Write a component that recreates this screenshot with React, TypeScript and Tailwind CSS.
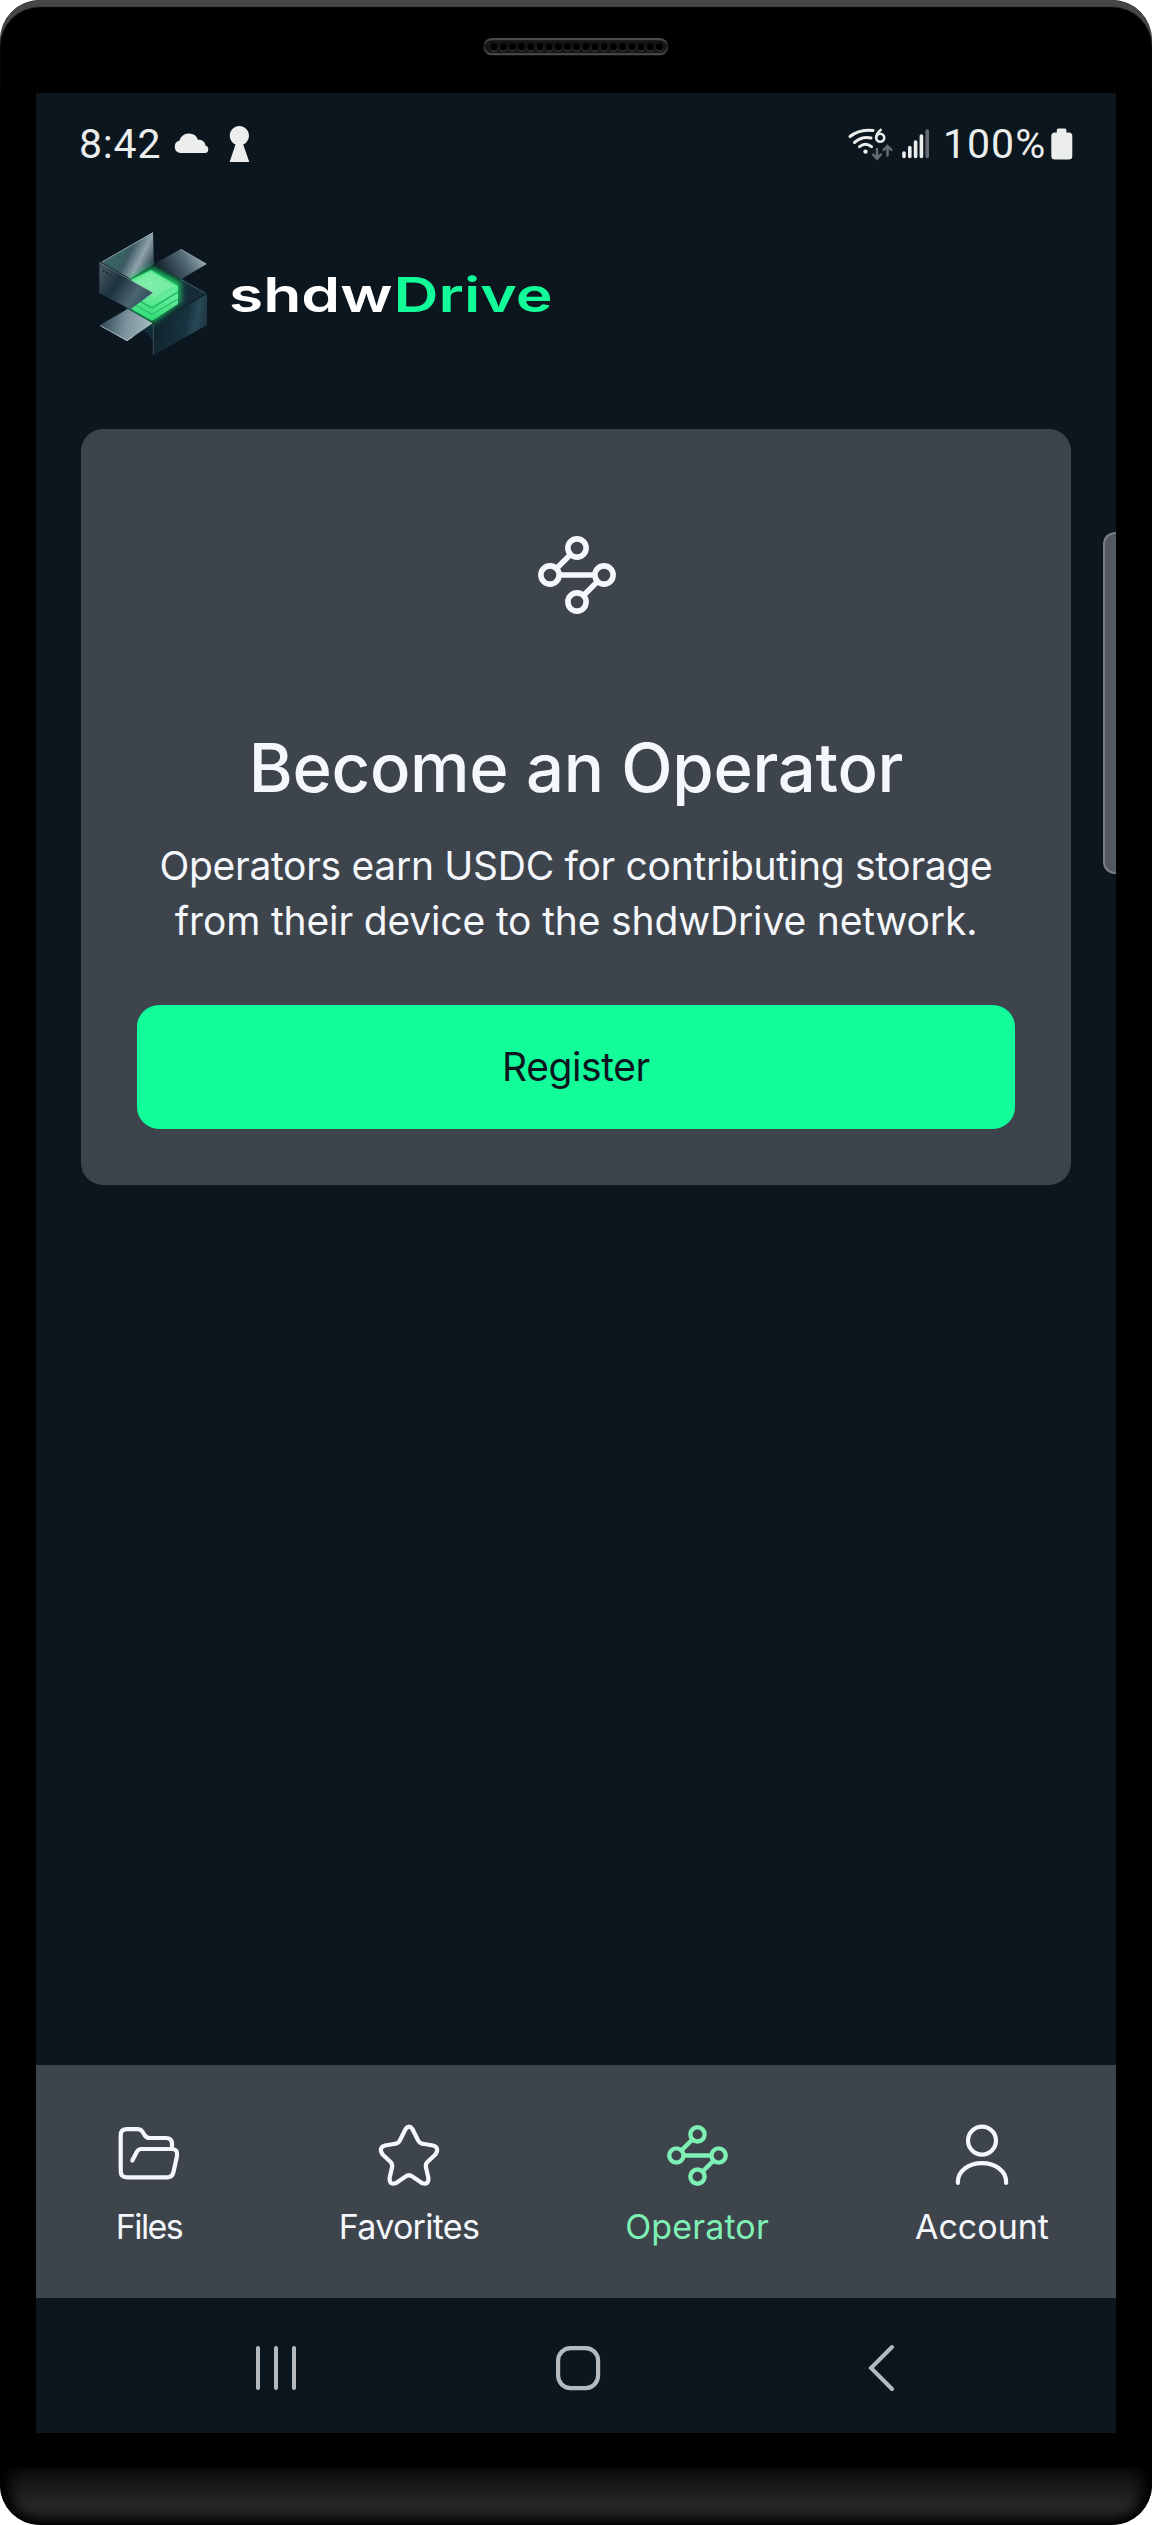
import type { ReactNode } from 'react';

const HOLES = Array.from({ length: 19 }, (_, i) => 11 + i * 9.19);

function Speaker() {
  return (
    <svg width="186" height="18" viewBox="0 0 186 18" className="block">
      <defs>
        <linearGradient id="sp" x1="0" y1="0" x2="0" y2="1">
          <stop offset="0" stopColor="#4c4c4c" />
          <stop offset="0.4" stopColor="#1c1c1c" />
          <stop offset="1" stopColor="#484848" />
        </linearGradient>
      </defs>
      <rect x="1.2" y="1.2" width="183.2" height="15" rx="7.5" fill="#151515" stroke="url(#sp)" strokeWidth="2.2" />
      {HOLES.map((x) => (
        <g key={x}>
          <circle cx={x} cy="9.7" r="3.7" fill="#4a4a4a" />
          <circle cx={x} cy="8.9" r="3.6" fill="#000" />
        </g>
      ))}
    </svg>
  );
}

function StatusBar() {
  return (
    <div className="flex h-[102px] items-start justify-between pl-[43px] pr-[43px] text-[#eceeee]">
      <div className="flex items-start">
        <span className="mt-[27px] w-[80px] whitespace-nowrap font-['Roboto',sans-serif] text-[41px] leading-[48px] tracking-[0.8px]">8:42</span>
        <svg width="92" height="40" viewBox="159 125 92 40" className="mt-[32px]" fill="currentColor">
          <path d="M180.500 153A6.300 6.300 0 0 1 179.600 140.600A9.700 9.700 0 0 1 198 139.800A6.600 6.600 0 0 1 205.600 145.600A3.900 3.900 0 0 1 205.800 153Z" />
          <path d="M235.500 144.500A9.600 9.600 0 1 1 243.200 144.500L249.300 162H229.600Z" />
        </svg>
      </div>
      <div className="flex items-start">
        <svg width="84" height="40" viewBox="847 125 84 40" className="mt-[32px]" fill="none" strokeLinecap="round">
          <g stroke="#eceeee" strokeWidth="3">
            <path d="M850 136.500Q860 128.500 873 130.600" />
            <path d="M854.500 142.500Q862 136 871 138" />
            <path d="M859.500 146.700Q865.500 141.700 871.500 146.700" />
          </g>
          <circle cx="865.500" cy="151.600" r="2.200" fill="#eceeee" />
          <path d="M881.500 129.200Q876.500 133 876.200 137.700" stroke="#eceeee" strokeWidth="2.600" strokeLinecap="butt" />
          <circle cx="880.200" cy="137.700" r="4" stroke="#eceeee" strokeWidth="2.600" />
          <g stroke="#656b71" strokeWidth="2.600">
            <path d="M877 149V158M873.200 154.700L877 158.600L880.800 154.700" />
            <path d="M887.500 155.500V146.500M883.700 149.900L887.500 146L891.300 149.900" />
          </g>
          <g stroke="#eceeee" strokeWidth="3.600">
            <path d="M904 153V156.400M909.800 147.500V156.400M915.600 142V156.400M921.400 136V156.400" />
            <path d="M927.200 131V156.400" stroke="#656b71" />
          </g>
        </svg>
        <span className="ml-[12px] mt-[27px] w-[108px] whitespace-nowrap font-['Roboto',sans-serif] text-[41px] leading-[48px] tracking-[1px]">100%</span>
        <svg width="22" height="32" viewBox="0 0 22 32" className="mt-[35px]" fill="currentColor">
          <rect x="5.800" y="0.500" width="9.600" height="8" rx="1.500" />
          <rect x="0.300" y="4.500" width="21" height="27" rx="3.500" />
        </svg>
      </div>
    </div>
  );
}

function LogoMark() {
  return (
    <svg width="140" height="154" viewBox="0 0 420 462" className="block">
      <defs>
        <linearGradient id="lb" x1="0.1" y1="0.2" x2="1" y2="0.6">
          <stop offset="0" stopColor="#3f5f6b" />
          <stop offset="0.4" stopColor="#35615f" />
          <stop offset="0.5" stopColor="#3d5963" />
          <stop offset="0.75" stopColor="#8fa3ab" />
          <stop offset="1" stopColor="#344b57" />
        </linearGradient>
        <linearGradient id="lf" x1="0" y1="0.2" x2="1" y2="0.8">
          <stop offset="0" stopColor="#43555f" />
          <stop offset="0.35" stopColor="#1c323e" />
          <stop offset="0.7" stopColor="#4b6571" />
          <stop offset="1" stopColor="#274854" />
        </linearGradient>
        <linearGradient id="lt" x1="1" y1="0.3" x2="0.1" y2="0.6">
          <stop offset="0" stopColor="#a3b5bb" />
          <stop offset="0.45" stopColor="#526873" />
          <stop offset="1" stopColor="#162631" />
        </linearGradient>
        <linearGradient id="lr" x1="0" y1="0.4" x2="1" y2="0.6">
          <stop offset="0" stopColor="#10242c" />
          <stop offset="0.6" stopColor="#173340" />
          <stop offset="0.78" stopColor="#294957" />
          <stop offset="1" stopColor="#1b303c" />
        </linearGradient>
        <linearGradient id="ll" x1="0" y1="0.4" x2="1" y2="0.5">
          <stop offset="0" stopColor="#2b4552" />
          <stop offset="0.5" stopColor="#7c939d" />
          <stop offset="1" stopColor="#a5bcc0" />
        </linearGradient>
        <linearGradient id="lg" x1="0.6" y1="0" x2="0.5" y2="1">
          <stop offset="0" stopColor="#48e989" />
          <stop offset="0.5" stopColor="#67ee9d" />
          <stop offset="1" stopColor="#2fd873" />
        </linearGradient>
        <filter id="glow" x="-30%" y="-30%" width="160%" height="160%">
          <feGaussianBlur stdDeviation="9" />
        </filter>
      </defs>
      <path d="M185 355L219 342V390Z" fill="#0f2c36" />
      <path d="M64 157L219 67L222 162L152 206Z" fill="url(#lb)" />
      <path d="M66 156L219 68" stroke="#b9c7cc" strokeWidth="3" fill="none" opacity="0.7" />
      <path d="M303 208L379 250L222 341V300Z" fill="#132730" />
      <path d="M303 208L379 250L300 295Z" fill="#162c38" />
      <path d="M222 341L381 252V345L222 434Z" fill="url(#lr)" />
      <path d="M303 208L376 250" stroke="#5c7480" strokeWidth="2" fill="none" />
      <path d="M150 205L215 170L302 214V275L217 338L146 296Z" fill="#1fd46b" filter="url(#glow)" opacity="0.9" />
      <path d="M222 162L303 117L380 162L303 208Z" fill="url(#lt)" />
      <path d="M303 118L379 162" stroke="#c4d0d3" strokeWidth="2" opacity="0.7" />
      <path d="M155 208L213 180L294 228V282L216 332L142 290Z" fill="url(#lg)" />
      <path d="M213 182L293 229L216 278L145 238L158 208Z" fill="#5fe993" />
      <path d="M165 212L213 187L280 228L222 262L178 238Z" fill="#8bf0b0" opacity="0.6" />
      <path d="M148 256L216 294L294 246" stroke="#25bd65" strokeWidth="5" fill="none" />
      <path d="M148 276L216 313L294 267" stroke="#27c169" strokeWidth="4" fill="none" />
      <path d="M190 228L212 216V238" stroke="#a5f6c2" strokeWidth="3" fill="none" opacity="0.7" />
      <path d="M58 157L219 248L151 298L58 250Z" fill="url(#lf)" />
      <path d="M58 157L219 248L198 263" stroke="#b9d7cd" strokeWidth="2" fill="none" opacity="0.6" />
      <path d="M60 345L143 297L218 340L141 393Z" fill="url(#ll)" />
      <path d="M61 347L141 392L160 379" stroke="#c8d4d6" strokeWidth="3" fill="none" opacity="0.85" />
      <path d="M220 343V434" stroke="#5d7681" strokeWidth="2" />
      <g fill="#182a33">
        <circle cx="71" cy="184" r="3" />
        <circle cx="81" cy="189" r="3" />
        <circle cx="91" cy="195" r="3" />
      </g>
    </svg>
  );
}

function Header() {
  return (
    <div className="flex h-[234px] items-start pl-[44px] pt-[15px]">
      <LogoMark />
      <svg width="330" height="60" viewBox="0 0 330 60" className="ml-[10px] mt-[55px] overflow-visible font-['Inter',sans-serif] text-[48px] font-semibold">
        <text x="-1" y="46.700" textLength="163.500" lengthAdjust="spacingAndGlyphs" fill="#ffffff">shdw</text>
        <text x="163.500" y="46.700" textLength="159" lengthAdjust="spacingAndGlyphs" fill="#12fc9a">Drive</text>
      </svg>
    </div>
  );
}

function NodesIcon({ size, stroke }: { size: number; stroke: number }) {
  return (
    <svg width={size} height={size} viewBox="0 0 78 78" fill="none" stroke="currentColor" strokeWidth={stroke} className="block">
      <circle cx="39" cy="12" r="9.100" />
      <circle cx="12" cy="39" r="9.100" />
      <circle cx="66" cy="39" r="9.100" />
      <circle cx="39" cy="66" r="9.100" />
      <path d="M32.500 18.500L18.500 32.500M21 39H57M59.500 45.500L45.500 59.500" />
    </svg>
  );
}

function OperatorCard() {
  return (
    <section className="mx-[45px] flex h-[756px] flex-col items-center rounded-[22px] bg-[#3e444b] px-14 text-[#f4f7fc]">
      <div className="ml-px mt-[107px]">
        <NodesIcon size={78} stroke={5.6} />
      </div>
      <h1 className="mt-[114px] h-[80px] whitespace-nowrap font-['Inter',sans-serif] text-[67px] font-medium leading-[80px] tracking-[-0.3px]">Become an Operator</h1>
      <p className="mt-[30px] text-center font-['Inter',sans-serif] text-[39px] leading-[55px]">
        <span className="block whitespace-nowrap tracking-[-0.3px]">Operators earn USDC for contributing storage</span>
        <span className="block whitespace-nowrap tracking-[-0.15px]">from their device to the shdwDrive network.</span>
      </p>
      <button className="mt-[57px] h-[124px] w-full shrink-0 rounded-[22px] bg-[#12fc9a] font-['Inter',sans-serif] text-[39px] tracking-[-0.4px] text-[#0c161e]">Register</button>
    </section>
  );
}

function Tab({ label, className, children }: { label: string; className: string; children: ReactNode }) {
  return (
    <div className={'flex flex-col items-center pt-[58px] ' + className}>
      {children}
      <span className="mt-[19px] whitespace-nowrap font-['Inter',sans-serif] text-[34px] leading-[42px]">{label}</span>
    </div>
  );
}

function TabBar() {
  return (
    <nav className="flex h-[233px] bg-[#3e444b] text-[#f4f7fc]">
      <Tab label="Files" className="w-[226px] tracking-[-1.6px]">
        <svg width="64" height="64" viewBox="116.500 2123 64 64" fill="none" stroke="currentColor" strokeWidth="4.200" strokeLinecap="round" strokeLinejoin="round">
          <path d="M171.500 2148V2144Q171.500 2138 165.500 2138H149Q146 2138 144 2135L142.500 2132.500Q140.500 2129.200 137 2129.200H126.500Q120.200 2129.200 120.200 2135.500V2171Q120.200 2177.300 126.500 2177.300H166.500Q171.800 2177.300 173 2172L176.500 2156Q177.500 2149 171.500 2149H141Q138 2149 136.500 2151.500L131.800 2160.500" />
        </svg>
      </Tab>
      <Tab label="Favorites" className="ml-[47px] w-[200px] tracking-[-0.7px]">
        <svg width="64" height="64" viewBox="376.600 2123 64 64" fill="none" stroke="currentColor" strokeWidth="4.200" strokeLinejoin="round">
          <path d="M405.200 2129Q408.600 2124.200 412 2129L417.500 2140Q419 2143.300 422.500 2143.800L432.500 2145.500Q439.500 2147.500 435 2154.500L427 2162Q425 2164 425.500 2167L428 2178Q428.300 2185.500 421.500 2183L412 2176.500Q408.600 2174 405.200 2176.500L395.700 2183Q388.900 2185.500 389.200 2178L391.700 2167Q392.200 2164 390.200 2162L382.200 2154.500Q377.700 2147.500 384.700 2145.500L394.700 2143.800Q398.200 2143.300 399.700 2140Z" />
        </svg>
      </Tab>
      <Tab label="Operator" className="ml-[88px] w-[200px] tracking-[0.15px] text-[#7ef0b5]">
        <div className="flex h-16 w-16 items-center justify-center">
          <NodesIcon size={61} stroke={5.6} />
        </div>
      </Tab>
      <Tab label="Account" className="ml-[85px] w-[200px]">
        <svg width="64" height="64" viewBox="949.600 2123 64 64" fill="none" stroke="currentColor" strokeWidth="4.200" strokeLinecap="round">
          <circle cx="981.600" cy="2140.600" r="14" />
          <path d="M957.500 2183V2182C957.500 2171 968 2163.200 981.600 2163.200S1005.700 2171 1005.700 2182V2183" />
        </svg>
      </Tab>
    </nav>
  );
}

function SystemBar() {
  return (
    <div className="flex h-[135px] items-center pl-[219px] pt-[5px] text-[#b5babe]">
      <svg width="44" height="50" viewBox="0 0 44 50" fill="none" stroke="currentColor" strokeWidth="4" strokeLinecap="round">
        <path d="M3 5V45M21 5V45M39 5V45" />
      </svg>
      <svg width="50" height="50" viewBox="0 0 50 50" className="ml-[254px]" fill="none" stroke="currentColor" strokeWidth="4.200">
        <rect x="5.100" y="5.100" width="40" height="40" rx="12.500" />
      </svg>
      <svg width="36" height="50" viewBox="0 0 36 50" className="ml-[262px]" fill="none" stroke="currentColor" strokeWidth="4" strokeLinecap="round">
        <path d="M27 4L6 25L27 46" />
      </svg>
    </div>
  );
}

export default function App() {
  return (
    <div className="h-[2525px] w-[1152px] overflow-hidden bg-white">
      <div className="flex h-full flex-col overflow-hidden rounded-[40px] bg-black">
        <div className="flex h-[93px] shrink-0 justify-center rounded-t-[40px] pt-[38px] shadow-[inset_0_7px_1px_#464646]">
          <Speaker />
        </div>
        <main className="relative mx-9 flex h-[2340px] shrink-0 flex-col bg-[#0c161e]">
          <StatusBar />
          <Header />
          <OperatorCard />
          <div className="flex-1" />
          <TabBar />
          <SystemBar />
          <div className="absolute right-0 top-[439px] h-[342px] w-[13px] rounded-l-[12px] border-2 border-r-0 border-[#7b7d7f] bg-[#525960]" />
        </main>
        <div className="mt-[34px] h-[58px] shrink-0 rounded-b-[40px] bg-[linear-gradient(180deg,#0b0b0b_0%,#262626_65%,#222222_78%,#070707_100%)] shadow-[inset_16px_0_14px_-6px_#000,inset_-16px_0_14px_-6px_#000]" />
      </div>
    </div>
  );
}
